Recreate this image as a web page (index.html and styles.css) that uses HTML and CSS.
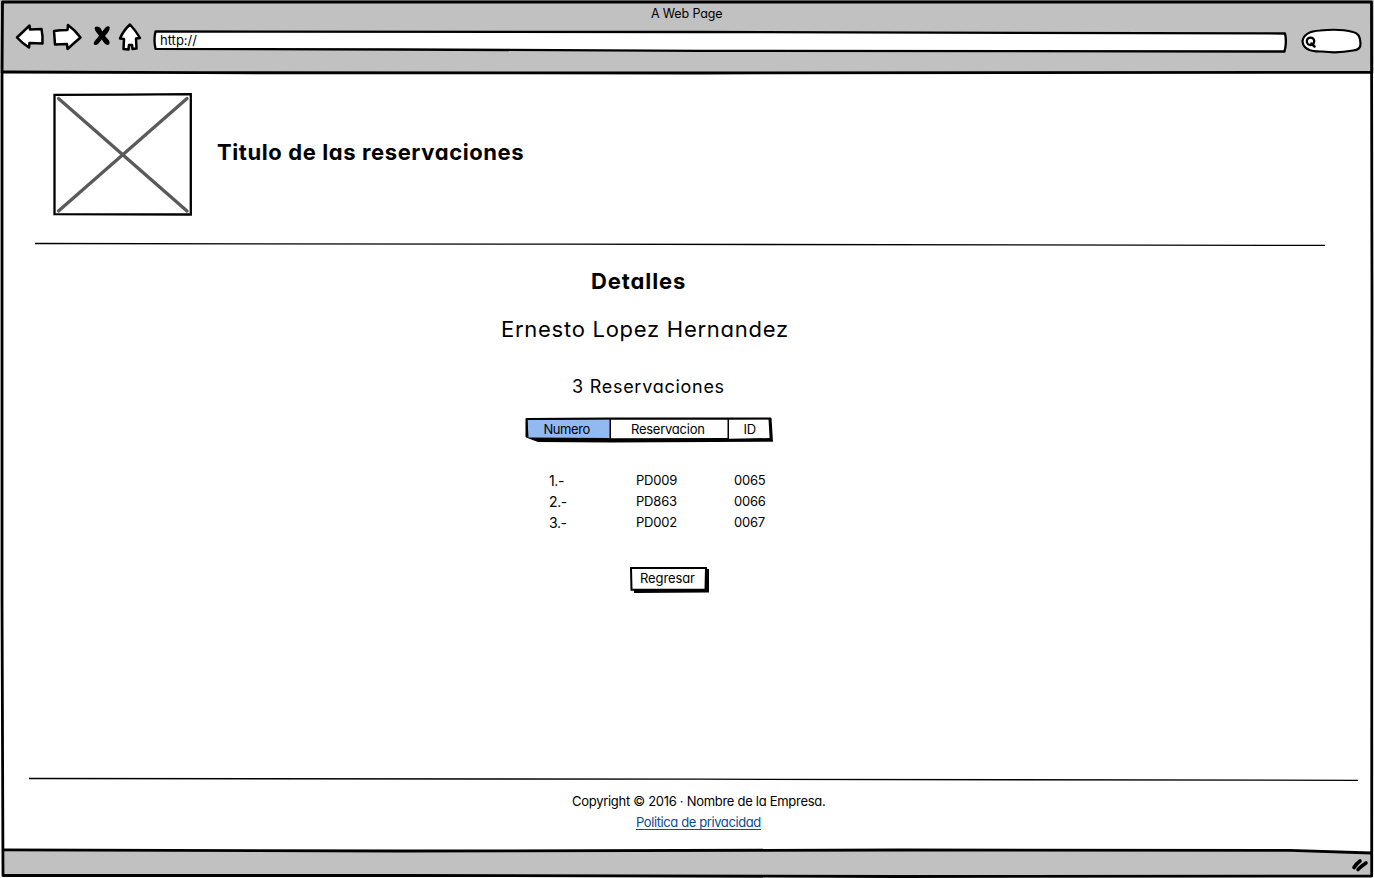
FILE: index.html
```html
<!DOCTYPE html>
<html lang="es">
<head>
<meta charset="utf-8">
<title>A Web Page</title>
<link rel="stylesheet" href="styles.css">
</head>
<body>
<div class="window">
  <header class="chrome">
    <div class="window-title"><span class="t-window">A Web Page</span></div>
    <div class="toolbar">
      <svg class="nav-icons" width="130" height="34" viewBox="14 20 130 34">
        <g fill="#fff" stroke="#000" stroke-width="2.5" stroke-linejoin="round">
          <path d="M17 37.5 L29.5 25.5 L30 29.5 L41.5 29 Q43 36 42.5 43.5 L29.5 43 L29 47.500 Q22 43 17 37.500Z"/>
          <path d="M54 31 Q60 30 67.500 30 L68 25 Q75 30 80.500 37.500 Q74 43 67.500 49 L67 44 L55 44.500 Q54.500 37 54 31Z"/>
          <path d="M130 24.500 Q136 31 140 38 L136 38.500 L136.500 48.500 L132.500 49 L132 45 L129 45 L128.500 49.500 L123.500 49 L124 39 L120 38.500 Q123 31 130 24.500Z"/>
        </g>
        <path d="M95 27 Q98 25.500 100.500 28 L102.300 31.500 L105.500 27.500 Q108 25.500 109.800 27 Q110 30 107.500 33 L105 36 L109 40.500 Q110.500 44 108 45 Q105.500 45.500 103.500 42 L101.800 39.500 L98.500 43.500 Q96 46 94 44.500 Q93 42.500 96 39.500 L99 35.800 L95.500 31 Q94 28.500 95 27Z"/>
      </svg>
      <div class="address">
        <svg class="sketch" width="1134" height="24" viewBox="153 29 1134 24"><path d="M155.500 31.500 L700 32 L1285 33.500 Q1287 42 1284.500 51.500 L700 50.800 L400 49.500 L155.500 48.800 Q153.500 40 155.500 31.500Z" fill="#fff" stroke="#000" stroke-width="2.300" stroke-linejoin="round"/></svg>
        <span class="t-url">http://</span>
      </div>
      <svg class="search" width="64" height="28" viewBox="1300 27 64 28">
        <path d="M1302.500 41 Q1304 31.500 1320 30.500 Q1340 28.500 1353 32 Q1360 33 1360.500 43 Q1361 50 1353 50.500 Q1338 53.500 1322 51.500 Q1303 52 1302.500 41Z" fill="#fff" stroke="#000" stroke-width="2.200"/>
        <circle cx="1310.500" cy="41.300" r="3.700" fill="none" stroke="#000" stroke-width="2.300"/>
        <path d="M1311.500 43.500 L1314.500 46.500" stroke="#000" stroke-width="2.500" stroke-linecap="round"/>
      </svg>
    </div>
  </header>

  <main class="page">
    <section class="banner">
      <svg class="logo" width="140" height="124" viewBox="53 93 140 124">
        <path d="M58.500 98.500 L187 211 M187 98.500 L58.500 211" stroke="#5a5a5a" stroke-width="3.300" stroke-linecap="round"/>
        <path d="M54.500 94.800 L125 94.600 L190.800 94.200 L190.800 214.500 L54.500 214.200Z" fill="none" stroke="#000" stroke-width="2.300"/>
      </svg>
      <h1 class="t-title">Titulo de las reservaciones</h1>
    </section>
    <svg class="rule rule-top" width="1290" height="4" viewBox="35 242 1290 4"><path d="M35 243.500 L560 244.200 L1325 245.400" fill="none" stroke="#000" stroke-width="1.300"/></svg>

    <section class="details">
      <h2 class="t-details">Detalles</h2>
      <p class="t-name">Ernesto Lopez Hernandez</p>
      <p class="t-count">3 Reservaciones</p>
      <div class="tabs">
        <svg class="sketch" width="250" height="28" viewBox="524 416 250 28">
          <path d="M526 419 L771.500 418 L773 441.800 L610 442.500 L538 442 L526 437.500Z" fill="#000"/>
          <path d="M527.500 419.800 L609.500 419.300 L609.500 438 L528.500 437.500Z" fill="#92b9f2"/>
          <path d="M611 419.400 L727.500 419.600 L727.500 438 L611 438.200Z M729 419.600 L768.500 419.300 L769.600 438 L729 438.800Z" fill="#fff"/>
          <path d="M526.500 437 L526.500 419 L610 418.500 L771 418.500" fill="none" stroke="#000" stroke-width="2" stroke-linejoin="round"/>
        </svg>
        <span class="t-tab tab-number">Numero</span><span class="t-tab tab-booking">Reservacion</span><span class="t-tab tab-id">ID</span>
      </div>
      <div class="rows">
        <span class="t-num">1.-</span><span class="t-code">PD009</span><span class="t-id">0065</span>
        <span class="t-num">2.-</span><span class="t-code">PD863</span><span class="t-id">0066</span>
        <span class="t-num">3.-</span><span class="t-code">PD002</span><span class="t-id">0067</span>
      </div>
      <button class="back" type="button">
        <svg class="sketch" width="82" height="28" viewBox="629 566 82 28">
          <path d="M634 571 L709 569 L709 592.500 L634 593Z" fill="#000"/>
          <path d="M631 568 L706 568 L705.500 589.500 L631.500 589.800Z" fill="#fff" stroke="#000" stroke-width="2"/>
        </svg>
        <span class="t-button">Regresar</span>
      </button>
    </section>
  </main>

  <footer class="footer">
    <svg class="rule rule-bottom" width="1329" height="4" viewBox="29 777 1329 4"><path d="M29 778.500 L700 779.200 L1358 780.300" fill="none" stroke="#000" stroke-width="1.300"/></svg>
    <p class="t-copy">Copyright © 2016 · Nombre de la Empresa.</p>
    <a class="t-link">Politica de privacidad</a>
  </footer>

  <svg class="frame" width="1374" height="878" viewBox="0 0 1374 878">
    <path d="M3 850 L1290 850 L1371 853 L1371 876 L3 876Z" fill="#c1c1c1"/>
    <g fill="none" stroke="#000" stroke-linejoin="round">
      <path d="M2.500 2 L1371.500 2 L1372 300 L1371.700 876 L900 876.500 L400 875.500 L3 875.500 L2 600 L2 80Z" stroke-width="2.800"/>
      <path d="M3 72 L200 72.700 L700 73 L1372 72.300" stroke-width="2.800"/>
      <path d="M3 849.800 L400 851 L900 850 L1290 850.300 L1371 853" stroke-width="2.800"/>
      <path d="M1354 867.500 Q1356 864 1360 861 M1358 869.500 Q1361.500 866 1366 863" stroke-width="3.600" stroke-linecap="round"/>
    </g>
  </svg>
</div>
</body>
</html>
```

FILE: styles.css
```css
* { box-sizing: border-box; }
body {
  margin: 0;
  color: #000;
  background: #fff;
  font: 13px/20px Inter, "Liberation Sans", sans-serif;
  font-feature-settings: "cv11";
}
h1, h2, p { margin: 0; }
svg { display: block; flex: none; }
span, h1, h2, p, a { white-space: nowrap; }

.window {
  position: relative;
  display: flex;
  flex-direction: column;
  width: 1374px;
  height: 878px;
  overflow: hidden;
}
.frame { position: absolute; inset: 0; pointer-events: none; }
.sketch { position: absolute; left: 0; top: 0; z-index: -1; }

.chrome { height: 73px; padding-top: 3px; background: #c1c1c1; }
.window-title { height: 17px; padding-left: 651px; }
.t-window { font-size: 12.5px; letter-spacing: -0.15px; }
.toolbar { display: flex; align-items: flex-start; padding-left: 14px; }
.address {
  position: relative;
  z-index: 0;
  width: 1134px;
  height: 24px;
  margin: 9px 13px 0 9px;
  padding: 1px 0 0 7px;
}
.search { margin-top: 7px; }
.t-url { letter-spacing: 0; }

.page { height: 704px; padding-top: 20px; }
.banner { display: flex; gap: 24px; padding-left: 53px; height: 149px; }
.t-title { margin-top: 44px; font-size: 22px; line-height: 30px; font-weight: 700; letter-spacing: 0.6px; }
.rule-top { margin-left: 35px; }

.t-details { margin: 20px 0 0 591px; font-size: 22px; line-height: 30px; font-weight: 700; letter-spacing: 0.9px; }
.t-name { margin: 18px 0 0 501px; font-size: 22px; line-height: 30px; letter-spacing: 0.73px; }
.t-count { margin: 29px 0 0 572px; font-size: 18px; line-height: 28px; letter-spacing: 0.73px; }
.tabs {
  position: relative;
  z-index: 0;
  display: grid;
  grid-template-columns: 85px 118px 42px;
  width: 250px;
  height: 28px;
  margin: 15px 0 0 524px;
  padding: 3px 0 0 2px;
}
.t-tab { letter-spacing: -0.25px; }
.tab-number { padding-left: 17.5px; letter-spacing: -0.45px; }
.tab-booking { padding-left: 20px; }
.tab-id { padding-left: 14.5px; }
.rows {
  display: grid;
  grid-template-columns: 87px 98px 60px;
  grid-auto-rows: 21px;
  margin: 26px 0 0 549px;
}
.t-num { padding-top: 1px; font-size: 14px; letter-spacing: -0.4px; }
.t-code, .t-id { letter-spacing: -0.2px; }
.back {
  position: relative;
  z-index: 0;
  display: block;
  width: 82px;
  height: 28px;
  margin: 33px 0 0 629px;
  padding: 1px 0 5px 11px;
  border: 0;
  background: none;
  color: inherit;
  font: inherit;
  font-feature-settings: inherit;
  text-align: left;
}
.t-button { letter-spacing: -0.1px; }

.footer { height: 101px; }
.rule-bottom { margin-left: 29px; }
.t-copy { margin: 10px 0 0 572px; letter-spacing: -0.29px; }
.t-link {
  display: inline-block;
  height: 18px;
  margin: 1px 0 0 636px;
  color: #0b4a96;
  border-bottom: 1px solid #0b4a96;
  letter-spacing: -0.4px;
}
```
